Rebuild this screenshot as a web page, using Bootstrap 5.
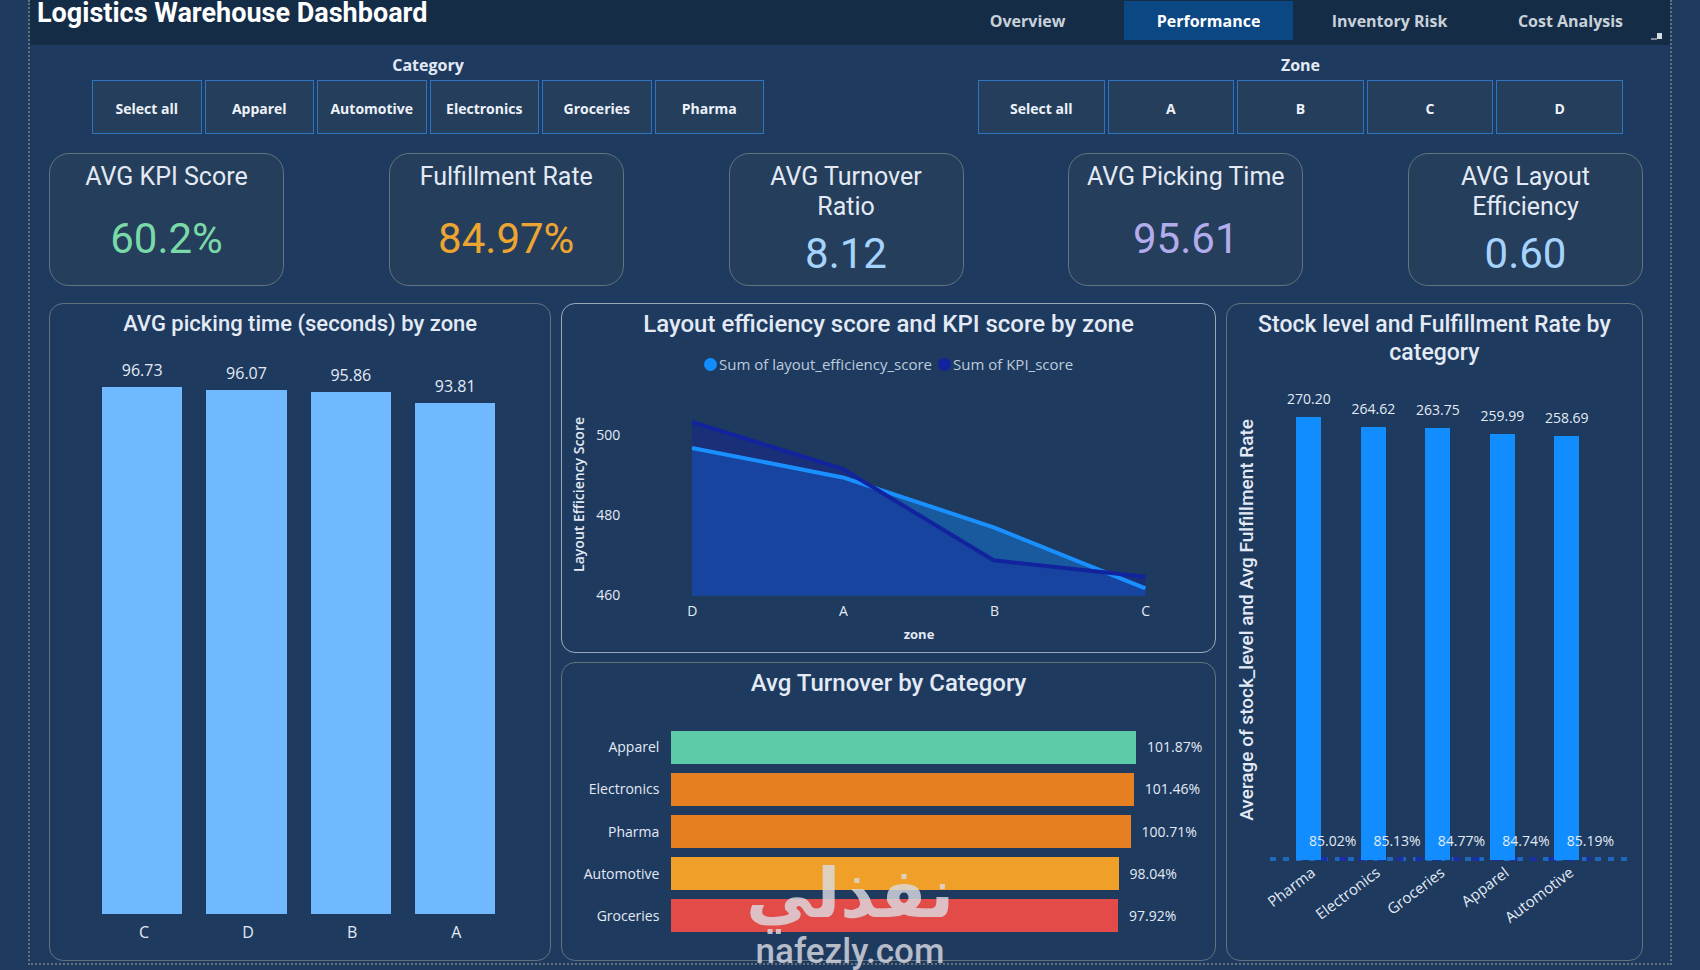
<!DOCTYPE html>
<html lang="en">
<head>
<meta charset="utf-8">
<meta name="viewport" content="width=device-width, initial-scale=1">
<title>Logistics Warehouse Dashboard</title>
<link href="https://cdn.jsdelivr.net/npm/bootstrap@5.3.0/dist/css/bootstrap.min.css" rel="stylesheet">
<style>
  body { background: #1e3a5f; color: #e3eaf5; font-family: "Open Sans", "Noto Sans", sans-serif; font-size: 14px; line-height: 20px; min-height: 900px; padding: 0 28px 8px; }
  h1, h2, h3, .kpi-value, .stock-axis { font-family: Roboto, "Liberation Sans", sans-serif; margin: 0; }
  .report { border: 2px dotted #65717d; border-top: 0; padding-bottom: 2px; }

  /* Header */
  .topbar { background: #152c47; height: 45px; padding: 0 15px 0 7px; }
  .topbar h1 { font-size: 27px; line-height: 26px; font-weight: 700; color: #fff; }
  .tabs { width: 44%; gap: 12px; padding-top: 1px; }
  .tabs .nav-link { padding: 2px 0 0; font-size: 16px; line-height: 37px; font-weight: 700; color: #c9d1da; border-radius: 0; white-space: nowrap; }
  .tabs .nav-link.active { background: #0b4782; color: #fff; }

  /* Slicers */
  .slicers { padding: 8px 47px 0 62px; gap: 214px; }
  .slicer-category { flex: 672 1 0; }
  .slicer-zone { flex: 645 1 0; }
  .slicers h2 { font-family: "Open Sans", sans-serif; font-size: 16px; line-height: 24px; font-weight: 700; margin-bottom: 3px; }
  .slicer-row { gap: 3px; }
  .slicer-row .btn { flex: 1 1 0; height: 54px; padding: 2px 0 0; border: 1px solid #2f74bf; border-radius: 0; background: #253e5b; color: #edf2fa; font-size: 14px; font-weight: 700; }

  /* KPI cards */
  .kpis { padding: 19px 27px 17px 19px; }
  .kpi-card { flex: 0 0 235px; height: 133px; padding: 8px 10px 0; background: #253e5b; border: 1px solid #63737f; border-radius: 20px; color: #e3eaf5; }
  .kpi-card h2 { font-size: 25px; line-height: 30px; font-weight: 400; }
  .kpi-value { font-size: 42px; line-height: 46px; }
  .c-green { color: #79d9a8; } .c-amber { color: #eda531; } .c-sky { color: #a5d3fb; } .c-violet { color: #b2abec; }

  /* Panels */
  .panels { display: grid; grid-template-columns: 502fr 654fr 417fr; gap: 10px; padding: 0 27px 0 19px; min-height: 0; }
  .middle { display: grid; grid-template-rows: 349fr 299fr; gap: 9px; min-height: 0; }
  .panel { border: 1px solid #63727f; border-radius: 14px; min-height: 0; padding-top: 7px; }
  .panel.selected { border-color: #9aa9b8; }
  .panel h2 { font-weight: 500; text-align: center; line-height: 26px; font-size: 24px; }
  .vertical { writing-mode: vertical-rl; transform: rotate(180deg); white-space: nowrap; }
  .plot { min-height: 0; }
  .plot-col { flex: 1 1 0; min-width: 0; }
  .plot-col > * { flex-shrink: 0; }

  .picking h2 { font-size: 22px; }
  .picking .plot { margin: 20px 43px 0 40px; font-size: 16px; }
  .picking .bar { width: 77%; background: #70b9ff; }
  .picking .value-label { margin-bottom: 7px; }
  .picking-axis { margin: 6px 42px 16px 42px; font-size: 16px; line-height: 24px; }

  .legend-row { font-size: 15px; line-height: 24px; margin-top: 15px; gap: 2px; color: #bccbdd; }
  .dot { width: 13px; height: 13px; border-radius: 50%; }
  .area-body { margin-top: 18px; min-height: 0; }
  .area-ytitle { width: 34px; font-weight: 600; }
  .area-ticks { width: 96px; margin: 31px 0 -10px; }
  .area-plot { margin: 41px 69px 0 0; min-height: 0; min-width: 0; }
  .area-cats { margin: 6px 69px 3px 130px; }
  .area-cats span { width: 40px; margin: 0 -20px; text-align: center; }
  .area-xtitle { margin: 0 69px 8px 130px; font-size: 13px; font-weight: 700; }

  .turnover-rows { display: grid; grid-auto-rows: 1fr; gap: 9px; margin: 35px 0 28px; min-height: 0; }
  .turnover-name { width: 109px; padding-right: 12px; }
  .turnover-value { margin-left: 11px; }

  .stock h2 { line-height: 28px; font-size: 23px; }
  .stock-body { min-height: 0; }
  .stock-axis { width: 50px; padding-top: 12px; padding-right: 10px; font-size: 19px; font-weight: 500; }
  .stock .plot { margin: 15px 43px 0 0; }
  .stock .bar { width: 25px; background: #118dff; }
  .stock .value-label { margin-bottom: 8px; }
  .rate-label { left: 50%; bottom: 9px; }
  .rate-line { left: -7px; bottom: -1px; width: calc(100% + 38px); height: 4px; }
  .stock-cats { margin: 0 43px 0 50px; height: 100px; }
  .stock-cats span { right: calc(50% - 4px); top: 0; transform-origin: 100% 50%; transform: rotate(-37deg); font-size: 15px; }

  /* Watermark */
  .watermark { left: 0; right: 0; bottom: 0; color: #dcdde3; opacity: .8; pointer-events: none; }
  .mark-ar { font-family: "DejaVu Sans", sans-serif; font-weight: 700; font-size: 68px; line-height: 80px; }
  .mark-en { font-family: Roboto, sans-serif; font-size: 35px; font-weight: 500; line-height: 36px; }
</style>
</head>
<body class="vh-100 d-flex flex-column position-relative overflow-hidden">
<main class="report flex-grow-1 d-flex flex-column">

  <header class="topbar d-flex justify-content-between align-items-start position-relative">
    <h1>Logistics Warehouse Dashboard</h1>
    <nav class="tabs nav nav-pills nav-justified flex-nowrap" aria-label="Pages">
      <a class="nav-link flex-fill w-25" href="#overview">Overview</a>
      <a class="nav-link flex-fill w-25 active" aria-current="page" href="#performance">Performance</a>
      <a class="nav-link flex-fill w-25" href="#inventory">Inventory Risk</a>
      <a class="nav-link flex-fill w-25" href="#cost">Cost Analysis</a>
    </nav>
    <svg class="position-absolute bottom-0 end-0 me-2 mb-1" width="12" height="8" aria-hidden="true"><path d="M7 0h5v6H7z" fill="#d5dbe2"/><path d="M1 5h6v2H1z" fill="#7f8d9c"/></svg>
  </header>

  <section class="slicers d-flex">
    <div class="slicer-category" role="group" aria-labelledby="lblCategory">
      <h2 id="lblCategory" class="text-center">Category</h2>
      <div class="slicer-row d-flex">
        <button type="button" class="btn">Select all</button>
        <button type="button" class="btn">Apparel</button>
        <button type="button" class="btn">Automotive</button>
        <button type="button" class="btn">Electronics</button>
        <button type="button" class="btn">Groceries</button>
        <button type="button" class="btn">Pharma</button>
      </div>
    </div>
    <div class="slicer-zone" role="group" aria-labelledby="lblZone">
      <h2 id="lblZone" class="text-center">Zone</h2>
      <div class="slicer-row d-flex">
        <button type="button" class="btn">Select all</button>
        <button type="button" class="btn">A</button>
        <button type="button" class="btn">B</button>
        <button type="button" class="btn">C</button>
        <button type="button" class="btn">D</button>
      </div>
    </div>
  </section>

  <section class="kpis d-flex justify-content-between text-center">
    <div class="card kpi-card"><h2>AVG KPI Score</h2><div class="kpi-value c-green my-auto">60.2%</div></div>
    <div class="card kpi-card"><h2>Fulfillment Rate</h2><div class="kpi-value c-amber my-auto">84.97%</div></div>
    <div class="card kpi-card"><h2>AVG Turnover<br>Ratio</h2><div class="kpi-value c-sky my-auto">8.12</div></div>
    <div class="card kpi-card"><h2>AVG Picking Time</h2><div class="kpi-value c-violet my-auto">95.61</div></div>
    <div class="card kpi-card"><h2>AVG Layout<br>Efficiency</h2><div class="kpi-value c-sky my-auto">0.60</div></div>
  </section>

  <section class="panels flex-grow-1">

    <article class="panel picking d-flex flex-column">
      <h2>AVG picking time (seconds) by zone</h2>
      <div class="plot flex-grow-1 d-flex">
        <div class="plot-col d-flex flex-column justify-content-end align-items-center"><span class="value-label">96.73</span><div class="bar" style="height:94.6%"></div></div>
        <div class="plot-col d-flex flex-column justify-content-end align-items-center"><span class="value-label">96.07</span><div class="bar" style="height:94%"></div></div>
        <div class="plot-col d-flex flex-column justify-content-end align-items-center"><span class="value-label">95.86</span><div class="bar" style="height:93.7%"></div></div>
        <div class="plot-col d-flex flex-column justify-content-end align-items-center"><span class="value-label">93.81</span><div class="bar" style="height:91.7%"></div></div>
      </div>
      <div class="picking-axis d-flex text-center"><span class="plot-col">C</span><span class="plot-col">D</span><span class="plot-col">B</span><span class="plot-col">A</span></div>
    </article>

    <div class="middle">
      <article class="panel selected d-flex flex-column">
        <h2>Layout efficiency score and KPI score by zone</h2>
        <div class="legend-row d-flex justify-content-center align-items-center">
          <span class="dot" style="background:#118dff"></span><span class="me-1">Sum of layout_efficiency_score</span>
          <span class="dot" style="background:#12239e"></span><span>Sum of KPI_score</span>
        </div>
        <div class="area-body flex-grow-1 d-flex">
          <div class="area-ytitle d-flex justify-content-center align-items-center"><span class="vertical">Layout Efficiency Score</span></div>
          <div class="area-ticks d-flex flex-column justify-content-between"><span>500</span><span>480</span><span>460</span></div>
          <div class="area-plot flex-grow-1 d-flex">
            <!-- y axis: 0 is 500, 160 is 460 -->
            <svg class="w-100 h-100 overflow-visible" viewBox="0 0 454 160" preserveAspectRatio="none" role="img" aria-label="Layout efficiency and KPI score for zones D, A, B and C">
              <path d="M0 13 151 42.500 302 92.500 454 153.500V161H0z" fill="#118dff" fill-opacity=".4"/>
              <path d="M0-13 151 34 302 125.500 454 142V161H0z" fill="#12239e" fill-opacity=".4"/>
              <path d="M0 13 151 42.500 302 92.500 454 153.500" fill="none" stroke="#1a8fff" stroke-width="4" stroke-linejoin="round"/>
              <path d="M0-13 151 34 302 125.500 454 142" fill="none" stroke="#12239e" stroke-width="4" stroke-linejoin="round"/>
            </svg>
          </div>
        </div>
        <div class="area-cats d-flex justify-content-between"><span>D</span><span>A</span><span>B</span><span>C</span></div>
        <div class="area-xtitle text-center">zone</div>
      </article>

      <article class="panel d-flex flex-column">
        <h2>Avg Turnover by Category</h2>
        <div class="turnover-rows flex-grow-1">
          <div class="d-flex align-items-center"><span class="turnover-name text-end">Apparel</span><div class="flex-grow-1 h-100 d-flex align-items-center"><div class="h-100" style="width:85.5%;background:#5ecba8"></div><span class="turnover-value">101.87%</span></div></div>
          <div class="d-flex align-items-center"><span class="turnover-name text-end">Electronics</span><div class="flex-grow-1 h-100 d-flex align-items-center"><div class="h-100" style="width:85.1%;background:#e67e22"></div><span class="turnover-value">101.46%</span></div></div>
          <div class="d-flex align-items-center"><span class="turnover-name text-end">Pharma</span><div class="flex-grow-1 h-100 d-flex align-items-center"><div class="h-100" style="width:84.5%;background:#e67e22"></div><span class="turnover-value">100.71%</span></div></div>
          <div class="d-flex align-items-center"><span class="turnover-name text-end">Automotive</span><div class="flex-grow-1 h-100 d-flex align-items-center"><div class="h-100" style="width:82.3%;background:#f0a028"></div><span class="turnover-value">98.04%</span></div></div>
          <div class="d-flex align-items-center"><span class="turnover-name text-end">Groceries</span><div class="flex-grow-1 h-100 d-flex align-items-center"><div class="h-100" style="width:82.2%;background:#e34b49"></div><span class="turnover-value">97.92%</span></div></div>
        </div>
      </article>
    </div>

    <article class="panel stock d-flex flex-column">
      <h2>Stock level and Fulfillment Rate by<br>category</h2>
      <div class="stock-body flex-grow-1 d-flex">
        <div class="stock-axis d-flex justify-content-center align-items-center"><span class="vertical">Average of stock_level and Avg Fulfillment Rate</span></div>
        <div class="plot flex-grow-1 d-flex position-relative">
          <svg class="rate-line position-absolute" aria-hidden="true">
            <line x1="0" y1="2" x2="100%" y2="2" stroke="#1f68bd" stroke-width="4" stroke-dasharray="6 7"/>
            <line x1="14%" y1="2" x2="89%" y2="2" stroke="#1a2fa6" stroke-width="4" stroke-dasharray="7 12"/>
          </svg>
          <div class="plot-col position-relative d-flex flex-column justify-content-end align-items-center"><span class="value-label">270.20</span><div class="bar" style="height:92.6%"></div><span class="rate-label position-absolute">85.02%</span></div>
          <div class="plot-col position-relative d-flex flex-column justify-content-end align-items-center"><span class="value-label">264.62</span><div class="bar" style="height:90.7%"></div><span class="rate-label position-absolute">85.13%</span></div>
          <div class="plot-col position-relative d-flex flex-column justify-content-end align-items-center"><span class="value-label">263.75</span><div class="bar" style="height:90.4%"></div><span class="rate-label position-absolute">84.77%</span></div>
          <div class="plot-col position-relative d-flex flex-column justify-content-end align-items-center"><span class="value-label">259.99</span><div class="bar" style="height:89.1%"></div><span class="rate-label position-absolute">84.74%</span></div>
          <div class="plot-col position-relative d-flex flex-column justify-content-end align-items-center"><span class="value-label">258.69</span><div class="bar" style="height:88.7%"></div><span class="rate-label position-absolute">85.19%</span></div>
        </div>
      </div>
      <div class="stock-cats d-flex">
        <div class="plot-col position-relative"><span class="position-absolute">Pharma</span></div>
        <div class="plot-col position-relative"><span class="position-absolute">Electronics</span></div>
        <div class="plot-col position-relative"><span class="position-absolute">Groceries</span></div>
        <div class="plot-col position-relative"><span class="position-absolute">Apparel</span></div>
        <div class="plot-col position-relative"><span class="position-absolute">Automotive</span></div>
      </div>
    </article>
  </section>
</main>

<div class="watermark position-absolute text-center">
  <div class="mark-ar" lang="ar" dir="rtl">نفذلي</div>
  <div class="mark-en">nafezly.com</div>
</div>
<script src="https://cdn.jsdelivr.net/npm/bootstrap@5.3.0/dist/js/bootstrap.bundle.min.js"></script>
</body>
</html>
